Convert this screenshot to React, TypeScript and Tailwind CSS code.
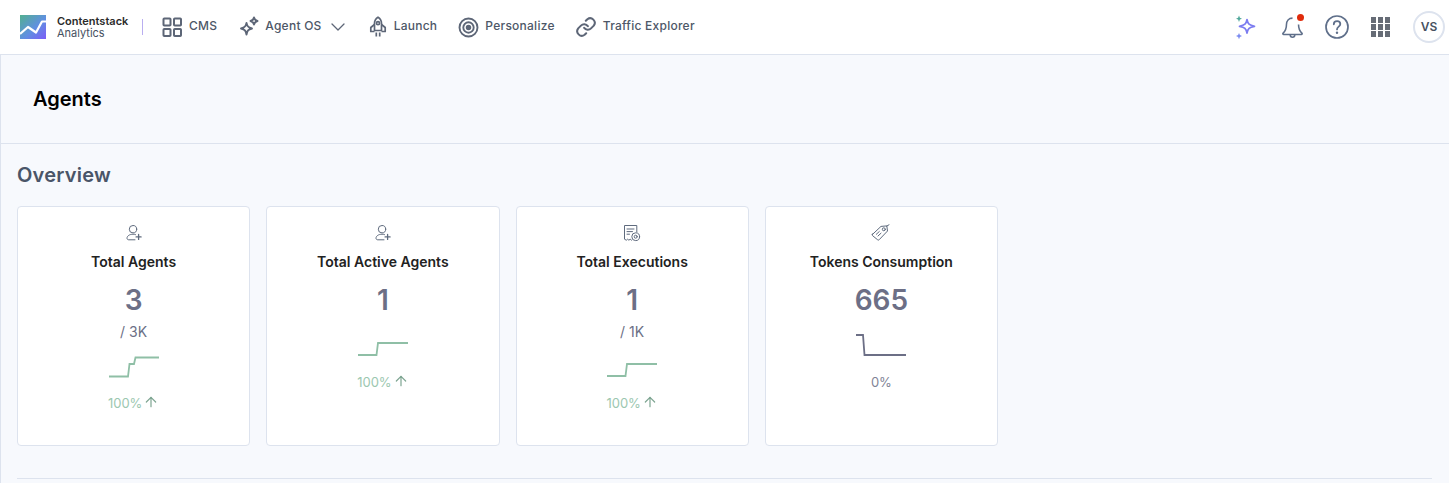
import { ArrowUp, ChevronDown } from "lucide-react";

const AgentIcon = () => (
  <svg width="18" height="18" viewBox="0 0 18 18" fill="none" stroke="#5f6b7e" strokeWidth="1" strokeLinecap="round">
    <circle cx="8" cy="5.2" r="3.7" />
    <path d="M10.5 10.6c-.8-.3-1.6-.4-2.5-.4-3.4 0-6 1.8-6 4 0 1 .8 1.6 1.8 1.600h6.2" />
    <path d="M13.6 10.4v5M11.1 12.9h5" strokeWidth="1.3" />
  </svg>
);

const ExecIcon = () => (
  <svg width="18" height="18" viewBox="0 0 18 18" fill="none" stroke="#5f6b7e" strokeWidth="1" strokeLinecap="round" strokeLinejoin="round">
    <path d="M8.5 16.200l-1.300-1-1.300 1-1.300-1-1.300 1-1.800-1V1.500h12.300v6.400" />
    <path d="M4 5h7M4 7.600h5.500M4 10.200h2.500" />
    <circle cx="12.700" cy="12.700" r="3.900" />
    <circle cx="12.700" cy="12.700" r="1.500" />
  </svg>
);

const TokenIcon = () => (
  <svg width="20" height="18" viewBox="0 0 20 18" fill="none" stroke="#5f6b7e" strokeWidth="1" strokeLinecap="round" strokeLinejoin="round">
    <path d="M1.500 10.400 10 2.400l5.800-.5.700 5.100-8.300 8.700a1.200 1.200 0 0 1-1.700 0l-5-4.100a1.200 1.200 0 0 1 0-1.700Z" />
    <circle cx="12.800" cy="5.300" r="1.500" />
    <path d="M5.300 10.300l3-2.800M7 12l3-2.800M15.500 2.200l2.500-1.400" />
  </svg>
);

const Spark = ({ points, color }: { points: string; color: string }) => (
  <svg width="52" height="22" viewBox="0 0 52 22" fill="none" stroke={color} strokeWidth="1.8" className="block">
    <polyline points={points} />
  </svg>
);

type Stat = {
  title: string;
  value: string;
  sub?: string;
  icon: React.ReactNode;
  points: string;
  color: string;
  delta: string;
  up: boolean;
};

const stats: Stat[] = [
  { title: "Total Agents", value: "3", sub: "/ 3K", icon: <AgentIcon />, points: "1,20.5 20,20.5 21.5,8 26,8 27.5,1.5 51,1.5", color: "#8fbfa6", delta: "100%", up: true },
  { title: "Total Active Agents", value: "1", icon: <AgentIcon />, points: "1,21 19.5,21 21,9 51,9", color: "#8fbfa6", delta: "100%", up: true },
  { title: "Total Executions", value: "1", sub: "/ 1K", icon: <ExecIcon />, points: "1,20 19.5,20 21,8 51,8", color: "#8fbfa6", delta: "100%", up: true },
  { title: "Tokens Consumption", value: "665", icon: <TokenIcon />, points: "1,1 8,1 9.5,21 51,21", color: "#6c6f86", delta: "0%", up: false },
];

function Card({ stat }: { stat: Stat }) {
  return (
    <div className="h-[240px] rounded border border-[#dde3ee] bg-white pt-[16px] flex flex-col items-center">
      <div className="h-[20px] flex items-center">{stat.icon}</div>
      <div className="mt-[9px] text-[14px] leading-[20px] font-semibold text-[#222222]">{stat.title}</div>
      <div className="mt-[8px] text-[28px] leading-[40px] font-semibold text-[#6c6f86]">{stat.value}</div>
      {stat.sub && <div className="mt-[2px] text-[14px] leading-[20px] text-[#6c6f86]">{stat.sub}</div>}
      <div className="mt-[14px]">
        <Spark points={stat.points} color={stat.color} />
      </div>
      <div className={(stat.sub ? "mt-[16px]" : "mt-[17px]") + " flex items-center gap-[1px] text-[13px] leading-[18px]"}>
        <span className={stat.up ? "text-[#9cc7b0]" : "text-[#7f8496]"}>{stat.delta}</span>
        {stat.up && <ArrowUp size={16} strokeWidth={1.8} className="text-[#7ea592] -mt-[3px]" />}
      </div>
    </div>
  );
}

function NavItem({ icon, label, className }: { icon: React.ReactNode; label: string; className?: string }) {
  return (
    <div className={"flex items-center gap-[6px] " + (className ?? "")}>
      {icon}
      <span className="mb-[2px] text-[12px] font-medium text-[#4d5767] tracking-[0.25px]">{label}</span>
    </div>
  );
}

export default function App() {
  return (
    <div className="h-[483px] overflow-hidden bg-[#f7f9fd] font-['Inter',sans-serif]">
      <header className="h-[55px] bg-white border-b border-[#dde3ee] flex items-center pl-[20px] pr-[4px]">
        <svg width="26" height="24" viewBox="0 0 26 24" className="shrink-0">
          <defs>
            <linearGradient id="logo" x1="0" y1="0" x2="1" y2="1">
              <stop offset="0" stopColor="#52b090" />
              <stop offset="0.55" stopColor="#6090e0" />
              <stop offset="1" stopColor="#7c5cf8" />
            </linearGradient>
          </defs>
          <rect width="26" height="24" fill="url(#logo)" />
          <polyline points="0,19 8,12 16,17.500 22,6.500 26,6.500" fill="none" stroke="#fff" strokeWidth="2.200" strokeLinejoin="round" />
        </svg>
        <div className="ml-[11px] w-[87px] leading-[13px]">
          <div className="text-[11px] font-semibold text-[#2b2b2b]">Contentstack</div>
          <div className="-mt-[1px] text-[11px] text-[#475161]">Analytics</div>
        </div>
        <div className="ml-[-2px] w-px h-[16px] bg-[#b9aef0]" />
        <NavItem
          className="ml-[19px]"
          label="CMS"
          icon={
            <svg width="21" height="21" viewBox="0 0 21 21" fill="none" stroke="#5d6677" strokeWidth="2" strokeLinejoin="round">
              <rect x="1.500" y="1.500" width="7" height="7" rx="0.800" />
              <rect x="12" y="1.500" width="7" height="7" rx="0.800" />
              <rect x="1.500" y="12" width="7" height="7" rx="0.800" />
              <rect x="12" y="12" width="7" height="7" rx="0.800" />
            </svg>
          }
        />
        <div className="ml-[22px] flex items-center">
          <NavItem
            label="Agent OS"
            icon={
              <svg width="20" height="22" viewBox="0 0 20 22" fill="none" stroke="#5d6677" strokeWidth="1.900" strokeLinejoin="round">
                <path d="M7.500 7c.7 3.400 1.700 4.600 5.500 5.500-3.800.9-4.800 2.100-5.500 6-.7-3.900-1.700-5.100-5.500-6 3.800-.9 4.800-2.100 5.500-5.500Z" />
                <path d="M15 1.500c.4 2.100 1 2.900 3.500 3.500-2.500.6-3.100 1.400-3.500 3.500-.4-2.100-1-2.900-3.500-3.500 2.500-.6 3.100-1.400 3.500-3.500Z" />
              </svg>
            }
          />
          <ChevronDown size={24} strokeWidth={1.300} className="ml-[4px] text-[#5d6677]" />
        </div>
        <NavItem
          className="ml-[18px]"
          label="Launch"
          icon={
            <svg width="20" height="22" viewBox="0 0 20 22" fill="none" stroke="#5d6677" strokeWidth="1.700" strokeLinejoin="round">
              <path d="M10 1.200c2.500 1.500 3.500 3.700 3.500 6.300v7h-7v-7c0-2.600 1-4.800 3.500-6.300Z" />
              <circle cx="10" cy="7.200" r="1.500" />
              <path d="M6.500 8.500 2.800 11.500v4h3.700M13.500 8.500l3.700 3v4h-3.700M8.300 16.500v4M11.700 16.500v4" />
            </svg>
          }
        />
        <NavItem
          className="ml-[21px]"
          label="Personalize"
          icon={
            <svg width="21" height="21" viewBox="0 0 21 21" fill="none" stroke="#5d6677" strokeWidth="1.900">
              <circle cx="10.500" cy="10.500" r="9" />
              <circle cx="10.500" cy="10.500" r="5.200" />
              <circle cx="10.500" cy="10.500" r="1.800" fill="#5d6677" />
            </svg>
          }
        />
        <NavItem
          className="ml-[20px]"
          label="Traffic Explorer"
          icon={
            <svg width="22" height="22" viewBox="0 0 24 24" fill="none" stroke="#5d6677" strokeWidth="2.200" strokeLinecap="round" strokeLinejoin="round">
              <path d="M10 13a5 5 0 0 0 7.500.5l3-3a5 5 0 0 0-7-7l-1.700 1.700" />
              <path d="M14 11a5 5 0 0 0-7.500-.5l-3 3a5 5 0 0 0 7 7l1.700-1.700" />
            </svg>
          }
        />
        <div className="ml-auto flex items-center">
          <svg width="24" height="26" viewBox="0 0 24 26" fill="none">
            <path d="M13 5.500c.8 4.400 2.200 5.800 7.500 6.800-5.300 1-6.700 2.400-7.500 6.800-.8-4.400-2.200-5.800-7.500-6.800 5.300-1 6.700-2.400 7.500-6.800Z" stroke="#7c7cf0" strokeWidth="1.700" strokeLinejoin="round" />
            <path d="M5 1.500l.9 2.300 2.100.9-2.100.9L5 8l-.9-2.400-2.100-.9 2.100-.9Z" fill="#4fa79a" />
            <path d="M5 19l.9 2.100 2.100.9-2.100.9L5 25.200l-.9-2.300-2.100-.9 2.100-.9Z" fill="#7c8cf0" />
          </svg>
          <div className="relative ml-[22px]">
            <svg width="25" height="25" viewBox="0 0 24 24" fill="none" stroke="#5f6f8a" strokeWidth="1.500" strokeLinejoin="round" className="block">
              <path d="M12 3c-3.600 0-5.800 2.800-5.800 6.200 0 4-1 6.300-3.200 8.200-.6.600-.2 1.300.5 1.300h17c.7 0 1.100-.7.5-1.300-2.200-1.900-3.200-4.200-3.200-8.200" />
              <path d="M9.800 19c0 1.400 1 2.300 2.200 2.300s2.200-.9 2.200-2.300" />
            </svg>
            <span className="absolute right-[1px] top-[-1px] size-[7px] rounded-full bg-[#e02b0b]" />
          </div>
          <svg width="24" height="24" viewBox="0 0 24 24" fill="none" stroke="#5f6f8a" className="ml-[20px]">
            <circle cx="12" cy="12" r="11" strokeWidth="1.700" />
            <path d="M8.800 9.300c0-2 1.500-3.200 3.300-3.200s3.200 1.200 3.200 2.900c0 2.700-3.300 2.600-3.300 5.400" strokeWidth="1.800" strokeLinecap="round" />
            <circle cx="12" cy="17.800" r="1.200" fill="#5f6f8a" stroke="none" />
          </svg>
          <div className="ml-[22px] grid grid-cols-3 gap-[1.500px]">
            {Array.from({ length: 9 }).map((_, i) => (
              <span key={i} className="size-[5.500px] bg-[#666c76]" />
            ))}
          </div>
          <div className="ml-[23px] size-[32px] rounded-full border-2 border-[#dde3ee] bg-white flex items-center justify-center text-[12px] font-semibold text-[#475161]">
            VS
          </div>
        </div>
      </header>

      <main className="border-l border-[#dde3ee] h-[428px]">
        <div className="h-[89px] border-b border-[#dde3ee] pl-[32px] flex items-center">
          <h1 className="text-[20px] font-semibold text-black -mt-[1px]">Agents</h1>
        </div>
        <div className="pl-[16px] pr-[17px]">
          <h2 className="mt-[18px] text-[20px] leading-[26px] font-semibold tracking-[0.25px] text-[#4a5568]">Overview</h2>
          <div className="mt-[18px] grid grid-cols-4 gap-[16px] w-[981px]">
            {stats.map((s) => (
              <Card key={s.title} stat={s} />
            ))}
          </div>
          <div className="mt-[32px] border-t border-[#dde3ee]" />
        </div>
      </main>
    </div>
  );
}
